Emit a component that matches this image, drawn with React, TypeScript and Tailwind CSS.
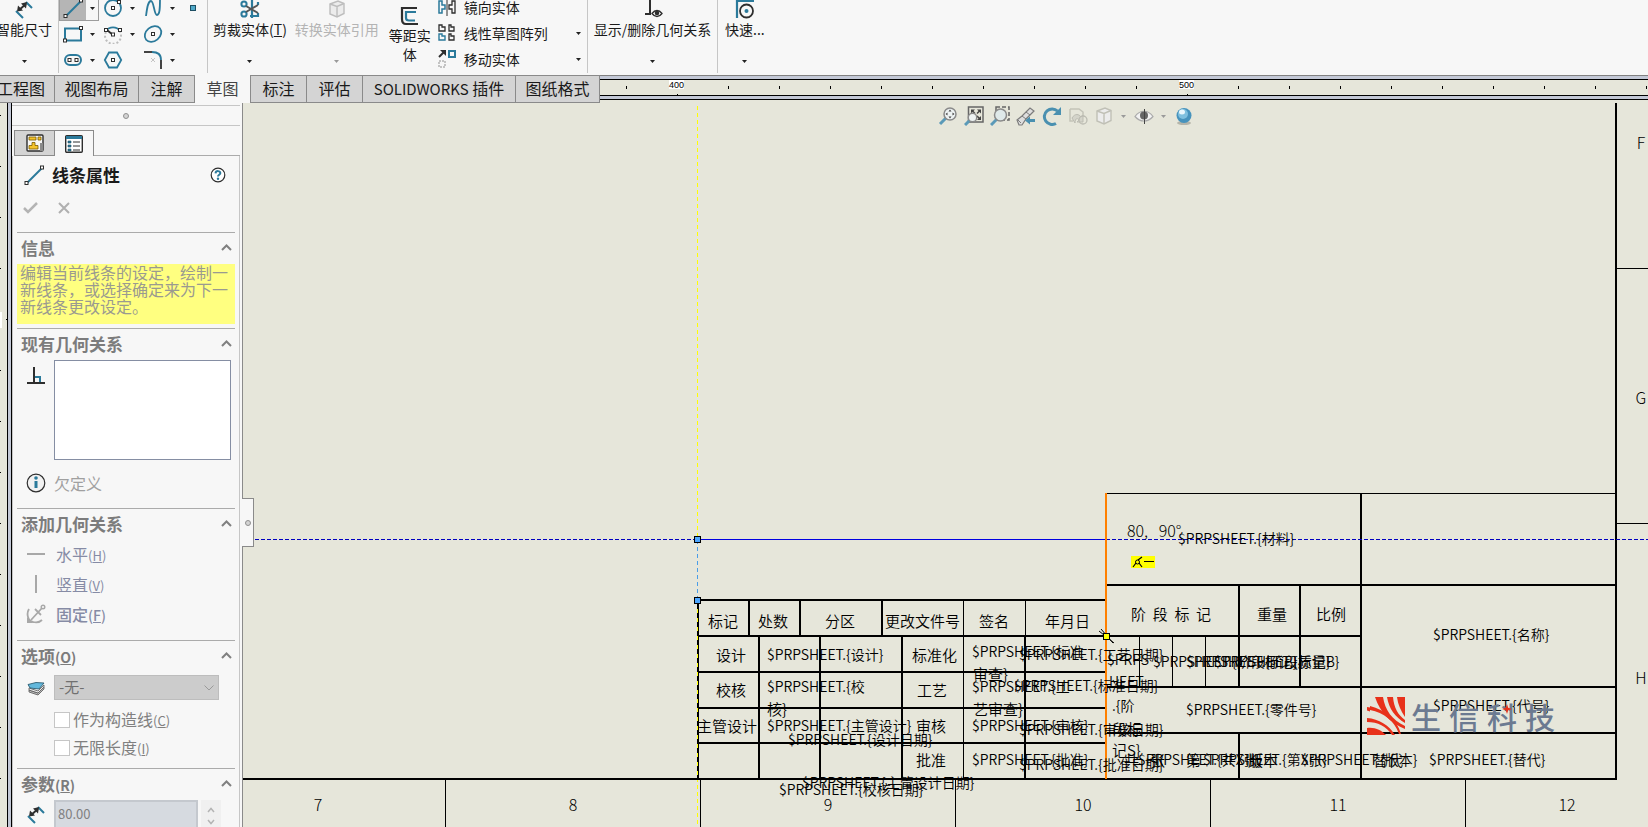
import type { ReactNode } from "react";

const BLUE = "#2b7a9b";
const INK = "#2e2e2e";

/* ---------- small shared pieces ---------- */

function Caret({ dim = false }: { dim?: boolean }) {
  return (
    <svg width="5" height="3" viewBox="0 0 5 3" aria-hidden="true" className="shrink-0">
      <path d="M0 0h5L2.5 3z" fill={dim ? "#9a9a9a" : "#222"} />
    </svg>
  );
}

function Node({ x, y }: { x: number; y: number }) {
  return <rect x={x - 1.5} y={y - 1.5} width="3" height="3" fill="#fff" stroke={INK} />;
}

function Icon({ w = 20, h = 20, children }: { w?: number; h?: number; children: ReactNode }) {
  return (
    <svg width={w} height={h} viewBox={`0 0 ${w} ${h}`} fill="none" aria-hidden="true" className="shrink-0">
      {children}
    </svg>
  );
}

/* ---------- sketch tool icons ---------- */

const LineIcon = () => (
  <Icon>
    <path d="M3 18L18 3" stroke={BLUE} strokeWidth="2" />
    <Node x={2.5} y={18} />
    <Node x={18} y={2.5} />
  </Icon>
);
const CircleIcon = () => (
  <Icon>
    <circle cx="10" cy="10" r="8" stroke={BLUE} strokeWidth="1.8" />
    <Node x={10} y={10} />
    <Node x={16} y={4} />
  </Icon>
);
const SplineIcon = () => (
  <Icon>
    <path d="M3 18C4 10 5 3 8 3s3 14 6 14 3-8 3-16" stroke={BLUE} strokeWidth="1.8" />
  </Icon>
);
const PointIcon = () => (
  <Icon>
    <rect x="7.5" y="7.5" width="5" height="5" fill="#4fa9c9" stroke="#1d4e63" />
  </Icon>
);
const RectIcon = () => (
  <Icon>
    <path d="M2 4.5h16v12H2z" stroke={BLUE} strokeWidth="2" />
    <Node x={18} y={4} />
    <Node x={2} y={16.5} />
  </Icon>
);
const ArcIcon = () => (
  <Icon>
    <path d="M3 7a8.5 8.5 0 0 1 14 0" stroke={BLUE} strokeWidth="1.8" />
    <path d="M3 8a8 8 0 1 0 14 0" stroke="#bdbdbd" strokeWidth="2" strokeDasharray="2 2" />
    <path d="M4 6l6 5" stroke={INK} strokeWidth="1.8" />
    <Node x={3} y={6} />
    <Node x={17} y={6} />
    <Node x={10} y={10.5} />
  </Icon>
);
const EllipseIcon = () => (
  <Icon>
    <ellipse cx="10" cy="10" rx="9" ry="7" transform="rotate(-40 10 10)" stroke={BLUE} strokeWidth="1.8" />
    <Node x={10} y={10} />
  </Icon>
);
const SlotIcon = () => (
  <Icon>
    <rect x="2" y="5" width="16" height="10" rx="5" stroke={BLUE} strokeWidth="2" />
    <Node x={6.5} y={10} />
    <Node x={13.5} y={10} />
  </Icon>
);
const HexIcon = () => (
  <Icon>
    <path d="M6 2.5h8l4.2 7.5L14 17.5H6L1.8 10z" stroke={BLUE} strokeWidth="1.8" />
    <Node x={10} y={10} />
  </Icon>
);
const FilletIcon = () => (
  <Icon>
    <path d="M1 2h8" stroke={INK} strokeWidth="1.8" />
    <path d="M9 2c6 0 9 2 9 8" stroke={BLUE} strokeWidth="1.8" />
    <path d="M18 10v9" stroke={INK} strokeWidth="1.8" />
    <path d="M8 8l4 4m0-4l-4 4" stroke="#c4c4c4" />
  </Icon>
);
const DimensionIcon = () => (
  <Icon>
    <path d="M2 12l7 7M12 3l6 6" stroke={BLUE} strokeWidth="2" />
    <path d="M5 11l7-6" stroke={INK} strokeWidth="2" />
    <path d="M3 12.500l1-6 5 5zM13 3l-1 6.500-5-5z" fill={INK} />
  </Icon>
);
const ScissorsIcon = () => (
  <Icon>
    <path d="M12 1v18M18 3v3m0 8v4M10 17h8" stroke={BLUE} strokeWidth="2.200" />
    <circle cx="4" cy="5" r="2.600" stroke={BLUE} strokeWidth="2" />
    <circle cx="4" cy="15" r="2.600" stroke={BLUE} strokeWidth="2" />
    <path d="M6 7l12 7M6 13l12-7" stroke="#555" strokeWidth="2" />
  </Icon>
);
const CubeIcon = ({ color = "#bdbdbd" }: { color?: string }) => (
  <Icon>
    <path d="M3 5l8-3 6 2.500v10L10 18l-7-3z" fill="#ececec" stroke={color} strokeWidth="1.400" />
    <path d="M3 5l7 2.500 7-3M10 7.500V18" stroke={color} strokeWidth="1.400" />
  </Icon>
);
const OffsetIcon = () => (
  <Icon>
    <path d="M17 2H2v11c0 3 1 5 4 5h12" stroke={INK} strokeWidth="2.200" />
    <path d="M16 6H6v6c0 2 1 2.500 3 2.500h6" stroke={BLUE} strokeWidth="2.200" />
  </Icon>
);
const MirrorIcon = () => (
  <Icon w={18} h={18}>
    <path d="M1 3h3v4h3v4H4v4H1z" stroke={BLUE} strokeWidth="1.500" />
    <path d="M17 3h-3v4h-3v4h3v4h3z" stroke={INK} strokeWidth="1.300" />
    <path d="M9 0v18" stroke={INK} />
  </Icon>
);
const PatternIcon = () => (
  <Icon w={18} h={18}>
    <path d="M1 1h3v2h3v4H1zM11 1h2v2h3v4h-5z" stroke={INK} strokeWidth="1.300" />
    <path d="M1 10h3v2h3v4H1z" stroke={BLUE} strokeWidth="1.400" />
    <path d="M11 10h2v2h3v4h-5z" stroke={INK} strokeWidth="1.300" />
  </Icon>
);
const MoveIcon = () => (
  <Icon w={18} h={18}>
    <path d="M1 7l5-5" stroke={INK} strokeWidth="2" />
    <path d="M2 0h6v6z" fill={INK} />
    <rect x="11" y="1" width="6" height="6" stroke={BLUE} strokeWidth="2" />
    <rect x="1" y="11" width="6" height="6" stroke="#c4c4c4" strokeWidth="2" strokeDasharray="2 1" />
  </Icon>
);
const RelationsIcon = () => (
  <Icon>
    <path d="M7 0v15M2 15h6" stroke={INK} strokeWidth="2" />
    <path d="M9 14.500c3-4 7-4 10 0-3 4-7 4-10 0z" fill="#fff" stroke={INK} strokeWidth="1.300" />
    <circle cx="14" cy="14" r="2.300" fill={INK} />
  </Icon>
);
const SnapIcon = () => (
  <Icon>
    <path d="M2 19V2h17" stroke={BLUE} strokeWidth="2.200" />
    <circle cx="11.500" cy="12" r="6.500" stroke={INK} strokeWidth="1.800" />
    <circle cx="11.500" cy="12" r="2" fill={BLUE} />
  </Icon>
);

/* ---------- ribbon ---------- */

const sketchTools: { label: string; icon: ReactNode; menu: boolean; active?: boolean }[] = [
  { label: "直线", icon: <LineIcon />, menu: true, active: true },
  { label: "圆", icon: <CircleIcon />, menu: true },
  { label: "样条曲线", icon: <SplineIcon />, menu: true },
  { label: "点", icon: <PointIcon />, menu: false },
  { label: "矩形", icon: <RectIcon />, menu: true },
  { label: "圆弧", icon: <ArcIcon />, menu: true },
  { label: "椭圆", icon: <EllipseIcon />, menu: true },
  { label: "", icon: null, menu: false },
  { label: "槽口", icon: <SlotIcon />, menu: true },
  { label: "多边形", icon: <HexIcon />, menu: false },
  { label: "圆角", icon: <FilletIcon />, menu: true },
];

function BigTool({ icon, children, dim }: { icon: ReactNode; children: ReactNode; dim?: boolean }) {
  return (
    <button
      type="button"
      disabled={dim}
      className={`-mt-px flex h-[74px] flex-col items-center whitespace-nowrap text-sm leading-5 ${dim ? "text-[#b4b4b4]" : "text-[#1a1a1a]"}`}
    >
      <span className="flex h-5 items-center">{icon}</span>
      <span className="h-[41px]">{children}</span>
      <Caret dim={dim} />
    </button>
  );
}

function Ribbon() {
  return (
    <header className="flex h-[75px] shrink-0 overflow-hidden bg-[#f7f7f7]">
      <div className="mb-[2px] flex w-[59px] shrink-0 justify-end border-r border-[#c6c6c6] pr-[6px]">
        <BigTool icon={<DimensionIcon />}>智能尺寸</BigTool>
      </div>
      <div className="mb-[2px] w-[149px] shrink-0 border-r border-[#c6c6c6]">
        <div className="-mt-[5px] grid grid-cols-[40px_40px_40px_28px]">
          {sketchTools.map((t, i) =>
            t.icon ? (
              <button
                key={i}
                type="button"
                aria-label={t.label}
                className={`flex h-[26px] items-center ${t.active ? "border border-[#9c9c9c]" : "border border-transparent"}`}
              >
                <span className={`flex h-full w-[26px] items-center justify-center ${t.active ? "bg-[#b5b5b5]" : ""}`}>{t.icon}</span>
                {t.menu && (
                  <span className="flex flex-1 justify-center">
                    <Caret />
                  </span>
                )}
              </button>
            ) : (
              <span key={i} />
            ),
          )}
        </div>
      </div>
      <div className="mb-[2px] flex w-[380px] shrink-0 border-r border-[#c6c6c6] pl-[5px]">
        <BigTool icon={<ScissorsIcon />}>
          剪裁实体(<u>T</u>)
        </BigTool>
        <div className="ml-2">
          <BigTool dim icon={<CubeIcon />}>
            转换实体引用
          </BigTool>
        </div>
        <button type="button" className="ml-[9px] flex w-[44px] flex-col items-center pt-[6px] text-sm leading-[19px] text-[#1a1a1a]">
          <OffsetIcon />
          <span>等距实体</span>
        </button>
        <ul className="-mt-[6px] ml-[6px] flex-1 text-sm text-[#1a1a1a]">
          <li className="flex h-[26px] items-center">
            <button type="button" className="flex items-center gap-2">
              <MirrorIcon />
              镜向实体
            </button>
          </li>
          <li className="flex h-[26px] items-center">
            <button type="button" className="flex flex-1 items-center gap-2 pr-[6px]">
              <PatternIcon />
              <span className="flex-1 text-left">线性草图阵列</span>
              <Caret />
            </button>
          </li>
          <li className="flex h-[26px] items-center">
            <button type="button" className="flex flex-1 items-center gap-2 pr-[6px]">
              <MoveIcon />
              <span className="flex-1 text-left">移动实体</span>
              <Caret />
            </button>
          </li>
        </ul>
      </div>
      <div className="mb-[2px] flex w-[130px] shrink-0 justify-center border-r border-[#c6c6c6]">
        <BigTool icon={<RelationsIcon />}>显示/删除几何关系</BigTool>
      </div>
      <div className="pl-[7px]">
        <BigTool icon={<SnapIcon />}>快速...</BigTool>
      </div>
    </header>
  );
}

/* ---------- tabs and horizontal ruler ---------- */

const tabs: { label: ReactNode; cls: string; active?: boolean }[] = [
  { label: "工程图", cls: "w-[55px] justify-end pr-[9px]" },
  { label: "视图布局", cls: "w-[84px] justify-center" },
  { label: "注解", cls: "w-[56px] justify-center" },
  { label: "草图", cls: "w-[56px] justify-center", active: true },
  { label: "标注", cls: "w-[56px] justify-center" },
  { label: "评估", cls: "w-[56px] justify-center" },
  {
    label: (
      <span>
        <span className="text-[15px]">SOLIDWORKS</span> 插件
      </span>
    ),
    cls: "w-[153px] justify-center",
  },
  { label: "图纸格式", cls: "w-[84px] justify-center" },
];

function TabBar() {
  return (
    <div className="flex h-7 shrink-0 bg-[#e6e6da]">
      <nav className="flex shrink-0">
        {tabs.map((t, i) => (
          <button
            key={i}
            type="button"
            className={`flex shrink-0 items-center whitespace-nowrap border-r border-[#8a8a8a] pb-[2px] text-base leading-5 ${
              t.active ? "bg-[#f7f7f7] text-[#444]" : "border-y bg-[#d4d4d4] text-[#1a1a1a]"
            } ${t.cls}`}
          >
            {t.label}
          </button>
        ))}
      </nav>
      <div className="min-w-0 flex-1">
        <div className="h-1 border-t border-[#808080] bg-[#c3c8d6]" />
        <div className="h-[17px] border-y border-black">
          <svg width="100%" height="15" aria-hidden="true" className="block">
            {Array.from({ length: 60 }, (_, i) => (
              <path key={i} d={(i - 1) % 10 ? `M${26.5 + i * 51} 6v3` : `M${26.5 + i * 51} 14v1`} stroke="#000" />
            ))}
            {[400, 500].map((n, i) => (
              <g key={n}>
                <rect x={69 + i * 510} y="0" width="15" height="9" fill="#fff" />
                <text x={76.5 + i * 510} y="8" textAnchor="middle" className="fill-black font-['Liberation_Sans'] text-[9px]">
                  {n}
                </text>
              </g>
            ))}
          </svg>
        </div>
        <div className="h-1 border-b border-black bg-[#c3c8d6]" />
      </div>
    </div>
  );
}

/* ---------- property panel ---------- */

function Section({ title, children }: { title: ReactNode; children: ReactNode }) {
  return (
    <section className="mx-1 border-t border-[#ababab]">
      <h3 className="flex h-[31px] items-center justify-between pb-[2px] pl-1 pr-[3px] text-[17px] font-bold text-[#7c7c7c]">
        <span>{title}</span>
        <button type="button" aria-label="折叠">
          <svg width="11" height="7" viewBox="0 0 11 7" fill="none" aria-hidden="true">
            <path d="M1 6l4.500-4.500L10 6" stroke="#808080" strokeWidth="2" />
          </svg>
        </button>
      </h3>
      {children}
    </section>
  );
}

function PropertyPanel() {
  return (
    <aside className="relative flex w-[231px] shrink-0 flex-col border-r border-[#8a8a8a] bg-[#f7f7f7]">
      <div className="mr-[2px] mt-[2px] flex h-[21px] shrink-0 items-center justify-center border-y border-[#c6c6c6]">
        <span className="h-[6px] w-[6px] rounded-full border border-[#909090] bg-[#d4d4d4]" />
      </div>
      <div className="mr-[2px] mt-1 flex h-[26px] shrink-0">
        <button type="button" aria-label="特征树" className="ml-[2px] flex w-10 items-center justify-center border border-r-0 border-[#8a8a8a] bg-[#d4d4d4]">
          <Icon w={18} h={18}>
            <rect x="1" y="1" width="16" height="16" rx="1" fill="#f7f7f7" stroke={INK} strokeWidth="1.400" />
            <path d="M3 3h7v3H3zM12 3h3v3h-3z" fill="#f5c42c" stroke="#7a5c00" strokeWidth=".8" />
            <path d="M6 8.500h3v3h3v3.500H3v-3.500h3z" fill="#f5c42c" stroke="#7a5c00" strokeWidth=".8" />
            <path d="M14 9h3v8h-3z" fill="#8a8a8a" />
          </Icon>
        </button>
        <button type="button" aria-label="属性" className="flex w-10 items-center justify-center border-x border-t border-[#8a8a8a]">
          <Icon w={18} h={18}>
            <rect x=".7" y=".7" width="16.600" height="16.600" rx="1" fill="#fff" stroke={INK} strokeWidth="1.400" />
            <path d="M1 1h16v3H1z" fill={BLUE} />
            <path d="M3 6h3v2H3zM3 10h3v2H3zM3 14h3v2H3z" fill={BLUE} stroke="#1d4e63" strokeWidth=".6" />
            <path d="M8 7h7M8 11h7M8 15h7" stroke={INK} />
          </Icon>
        </button>
        <span className="flex-1 border-b border-[#ababab]" />
      </div>

      <div className="mr-[2px] min-h-0 flex-1 overflow-hidden border-x border-[#c6c6c6]">
        <div className="flex h-[38px] items-center pl-[11px] pr-[13px]">
          <LineIcon />
          <h2 className="ml-2 flex-1 text-[17px] font-bold text-[#1a1a1a]">线条属性</h2>
          <button type="button" aria-label="帮助">
            <Icon w={16} h={16}>
              <circle cx="8" cy="8" r="6.800" fill="#fff" stroke={INK} strokeWidth="1.200" />
              <path d="M5.500 6.300C5.800 3.300 10.600 3.500 10.300 6.300 10.100 7.800 8 7.700 8 9.500" stroke={BLUE} strokeWidth="2" />
              <circle cx="8" cy="11.800" r="1.200" fill={BLUE} />
            </Icon>
          </button>
        </div>
        <div className="flex h-[38px] items-start gap-[19px] pl-[10px] pt-[7px]">
          <button type="button" aria-label="确定" disabled>
            <Icon w={15} h={14}>
              <path d="M1 7l4 4 9-9" stroke="#b4b4b4" strokeWidth="2.500" />
            </Icon>
          </button>
          <button type="button" aria-label="取消" disabled>
            <Icon w={14} h={14}>
              <path d="M2 2l10 10M12 2L2 12" stroke="#b0b0b0" strokeWidth="2" />
            </Icon>
          </button>
        </div>

        <Section title="信息">
          <p className="mb-1 h-[60px] break-all bg-[#ffff80] pl-[3px] pr-[7px] text-base leading-[17px] text-[#9a9a90]">
            编辑当前线条的设定，绘制一新线条，或选择确定来为下一新线条更改设定。
          </p>
        </Section>

        <Section title="现有几何关系">
          <div className="flex pr-1">
            <span className="w-[37px] pl-[9px] pt-[6px]">
              <Icon>
                <path d="M8 1v16" stroke={INK} strokeWidth="2" />
                <path d="M1 17h18" stroke={INK} strokeWidth="2" />
                <path d="M9 11h5v5" stroke={BLUE} strokeWidth="2" />
              </Icon>
            </span>
            <select multiple size={4} aria-label="现有几何关系" className="h-[100px] flex-1 appearance-none border border-[#858ea3] bg-white" />
          </div>
          <div className="flex h-12 items-center pb-[2px] pl-[9px] text-base text-[#a0a0a0]">
            <Icon>
              <circle cx="10" cy="10" r="8.800" fill="#f2f2f2" stroke={INK} strokeWidth="1.200" />
              <path d="M10 8v7" stroke={BLUE} strokeWidth="3" />
              <circle cx="10" cy="5" r="1.800" fill={BLUE} />
            </Icon>
            <span className="ml-2">欠定义</span>
          </div>
        </Section>

        <Section title="添加几何关系">
          <div className="mb-[10px] pl-[9px] text-base text-[#868ba5]">
            <button type="button" className="flex h-[30px] w-full items-center gap-[10px] pb-[2px]">
              <Icon>
                <path d="M1 10h18" stroke="#a8a8a8" strokeWidth="2" />
              </Icon>
              <span>
                水平<span className="text-[13px]">(<u>H</u>)</span>
              </span>
            </button>
            <button type="button" className="flex h-[30px] w-full items-center gap-[10px] pb-[2px]">
              <Icon>
                <path d="M10 1v18" stroke="#a8a8a8" strokeWidth="2" />
              </Icon>
              <span>
                竖直<span className="text-[13px]">(<u>V</u>)</span>
              </span>
            </button>
            <button type="button" className="flex h-[30px] w-full items-center gap-[10px] pb-[2px] font-medium">
              <Icon>
                <path d="M5 16L16 4M9 5l6 6" stroke="#a8a8a8" strokeWidth="1.800" />
                <path d="M3 5c-3 5-1 12 4 13 4 1 7 0 9-2" stroke="#a8a8a8" strokeWidth="1.800" />
                <path d="M1 13v6h6z" fill="#a8a8a8" />
                <circle cx="17" cy="3" r="1.800" stroke="#a8a8a8" strokeWidth="1.400" />
              </Icon>
              <span>
                固定<span className="text-sm">(<u>F</u>)</span>
              </span>
            </button>
          </div>
        </Section>

        <Section title={<>选项<span className="text-sm">(<u>O</u>)</span></>}>
          <div className="mt-[3px] flex items-center">
            <span className="w-[37px] pl-[9px]">
              <Icon>
                <path d="M3 12l9 3 6-6v2l-6 6-9-3z" fill="#bbb" stroke="#555" strokeWidth=".8" />
                <path d="M3 10l9 3 6-6v2l-6 6-9-3z" fill="#eee" stroke="#555" strokeWidth=".8" />
                <path d="M2 6.500l8-2 8 .500-5 6-9-1z" fill="#63b8dc" stroke="#1d4e63" strokeWidth=".8" />
              </Icon>
            </span>
            <div className="relative mr-4 flex-1">
              <select disabled aria-label="图层" className="block h-[25px] w-full appearance-none border border-[#bdbdbd] bg-[#cccccc] pl-1 text-[15px] text-[#707070] opacity-100">
                <option>-无-</option>
              </select>
              <svg width="10" height="6" viewBox="0 0 10 6" fill="none" aria-hidden="true" className="pointer-events-none absolute right-[5px] top-[10px]">
                <path d="M.5.5L5 5 9.500.5" stroke="#9a9a9a" />
              </svg>
            </div>
          </div>
          <div className="mb-[6px] mt-[6px] pl-[37px] text-base text-[#808080]">
            <label className="flex h-7 items-center gap-[3px]">
              <input type="checkbox" disabled className="h-4 w-4 appearance-none border border-[#c6c6c6] bg-white" />
              <span className="pb-[2px]">
                作为构造线<span className="text-[13px]">(<u>C</u>)</span>
              </span>
            </label>
            <label className="flex h-7 items-center gap-[3px]">
              <input type="checkbox" disabled className="h-4 w-4 appearance-none border border-[#c6c6c6] bg-white" />
              <span className="pb-[2px]">
                无限长度<span className="text-[13px]">(<u>I</u>)</span>
              </span>
            </label>
          </div>
        </Section>

        <Section title={<>参数<span className="text-sm">(<u>R</u>)</span></>}>
          <div className="flex">
            <span className="w-[37px] pl-[9px] pt-1">
              <DimensionIcon />
            </span>
            <input aria-label="长度" disabled defaultValue="80.00" className="h-8 w-[144px] border-2 border-[#c4c8ce] bg-[#d6dae0] pb-[6px] pl-[2px] text-[13px] text-[#808080]" />
            <div className="ml-[3px] flex h-8 w-5 flex-col items-center justify-evenly bg-[#f0f0f0]">
              <button type="button" disabled aria-label="增加">
                <svg width="8" height="6" viewBox="0 0 8 6" fill="none" aria-hidden="true" className="block">
                  <path d="M1 5l3-3.500L7 5" stroke="#b4b4b4" strokeWidth="1.500" />
                </svg>
              </button>
              <button type="button" disabled aria-label="减少">
                <svg width="8" height="6" viewBox="0 0 8 6" fill="none" aria-hidden="true" className="block">
                  <path d="M1 1l3 3.500L7 1" stroke="#b4b4b4" strokeWidth="1.500" />
                </svg>
              </button>
            </div>
          </div>
        </Section>
      </div>

      <button
        type="button"
        aria-label="收起面板"
        className="absolute -right-3 top-[395px] z-10 flex h-[49px] w-3 items-center justify-center border border-l-0 border-[#8a8a8a] bg-[#f7f7f7]"
      >
        <span className="h-[6px] w-[6px] rounded-full border border-[#909090] bg-[#d4d4d4]" />
      </button>
    </aside>
  );
}

/* ---------- drawing sheet ---------- */

const thick =
  "M243 779H1617M1616 99V780M698 600H1106M698 636H1106M698 672H1106M698 708H1106M698 743H1106" +
  "M749 600V636M800 600V636M882 600V636M759 636V779M820 636V779M902 636V779M1025 636V779" +
  "M1361 493V779M1106 585H1616M1239 585V687M1300 585V687M1106 636H1361M1106 687H1616M1106 733H1616M1239 733V779";

const thin =
  "M1106 493.5H1616M963.5 600V779M1025.5 600V636M698.5 600V779M1139.5 636V687M1172.5 636V687M1205.5 636V687" +
  "M1616 268.5H3000M1616 523.5H3000M445.500 779V3000M700.500 779V3000M955.500 779V3000M1210.500 779V3000M1465.500 779V3000";

/* x, baseline, text */
type Note = [number, number, string];

const labels: Note[] = [
  [708, 627, "标记"],
  [758, 627, "处数"],
  [825, 627, "分区"],
  [885, 627, "更改文件号"],
  [979, 627, "签名"],
  [1045, 627, "年月日"],
  [716, 661, "设计"],
  [912, 661, "标准化"],
  [973, 680, "审查}"],
  [716, 696, "校核"],
  [767, 715, "核}"],
  [917, 696, "工艺"],
  [973, 715, "艺审查}"],
  [697, 732, "主管设计"],
  [916, 732, "审核"],
  [916, 766, "批准"],
  [1131, 620, "阶\u00a0\u00a0段\u00a0\u00a0标\u00a0\u00a0记"],
  [1257, 620, "重量"],
  [1316, 620, "比例"],
  [1112, 735, "段标"],
  [1112, 756, "记S}"],
  [1124, 766, "共"],
  [1150, 766, "张"],
  [1186, 766, "第"],
  [1248, 766, "版本"],
  [1373, 766, "替代"],
];

const links: Note[] = [
  [767, 660, "$PRPSHEET.{设计}"],
  [972, 657, "$PRPSHEET.{标准"],
  [1019, 660, "$PRPSHEET.{工艺日期}"],
  [767, 692, "$PRPSHEET.{校"],
  [972, 692, "$PRPSHEET.{工"],
  [1014, 691, "$PRPSHEET.{标准日期}"],
  [767, 731, "$PRPSHEET.{主管设计}"],
  [972, 731, "$PRPSHEET.{审核}"],
  [1019, 735, "$PRPSHEET.{审核日期}"],
  [788, 745, "$PRPSHEET.{设计日期}"],
  [972, 765, "$PRPSHEET.{批准}"],
  [1019, 770, "$PRPSHEET.{批准日期}"],
  [802, 788, "$PRPSHEET.{主管设计日期}"],
  [779, 795, "$PRPSHEET.{校核日期}"],
  [1178, 544, "$PRPSHEET.{材料}"],
  [1107, 665, "$PRPS"],
  [1109, 687, "HEET"],
  [1112, 711, ".{阶"],
  [1153, 667, "$PRPSHEET.{阶段标记}"],
  [1186, 667, "$PRPSHEET.{阶段标记B}"],
  [1214, 667, "$PRPSHEET.{质量}"],
  [1186, 715, "$PRPSHEET.{零件号}"],
  [1433, 640, "$PRPSHEET.{名称}"],
  [1433, 711, "$PRPSHEET.{代号}"],
  [1138, 765, "$PRPSHEET.{共X张}"],
  [1203, 765, "$PRPSHEET.{第X张}"],
  [1301, 765, "$PRPSHEET.{版本}"],
  [1429, 765, "$PRPSHEET.{替代}"],
];

const zones: Note[] = [
  [318, 811, "7"],
  [573, 811, "8"],
  [828, 811, "9"],
  [1083, 811, "10"],
  [1338, 811, "11"],
  [1567, 811, "12"],
  [1641, 149, "F"],
  [1641, 404, "G"],
  [1641, 684, "H"],
];

function Notes({ items, className, anchor }: { items: Note[]; className: string; anchor?: "middle" }) {
  return (
    <g className={className} textAnchor={anchor}>
      {items.map(([x, y, t], i) => (
        <text key={i} x={x} y={y}>
          {t}
        </text>
      ))}
    </g>
  );
}

function Sheet() {
  return (
    <svg width="100%" height="100%" className="absolute inset-0 fill-black font-['Noto_Sans_CJK_SC',sans-serif]" role="img" aria-label="图纸">
      <g transform="translate(-243 -103)">
        <path d="M697.500 99V3000" stroke="#ffff00" strokeDasharray="4 3" />
        <path d="M697.500 540V600" stroke="#4a9de8" strokeDasharray="4 3" />
        <path d={thick} stroke="#000" strokeWidth="2" />
        <path d={thin} stroke="#000" />
        <path d="M697.500 600V779" stroke="#000" />
        <path d="M697.500 600V779" stroke="#ffff00" strokeDasharray="4 5" />
        <path d="M243 539.500H697M1106 539.500H3000" stroke="#0000c0" strokeDasharray="4 2" />
        <path d="M697 539.500H1106" stroke="#0000e0" />
        <path d="M1106 493V779" stroke="#ff8000" strokeWidth="2" />

        <Notes items={labels} className="text-[15px] font-[350]" />
        <Notes items={links} className="text-sm font-[350]" />
        <Notes items={zones} className="text-base font-light" anchor="middle" />

        <text x="1127" y="537" className="text-base font-light">
          80,&nbsp;&nbsp;&nbsp;90°
        </text>
        <rect x="1131" y="556" width="24" height="12" fill="#ffff00" />
        <path d="M1133 567l3-4M1138 560l4-3M1139 563l3 4M1144 561.500h10" stroke="#000" strokeWidth="1.200" fill="none" />
        <circle cx="1137.500" cy="562" r="2" stroke="#000" fill="none" />

        {[540, 601].map((y) => (
          <rect key={y} x="694.500" y={y - 3.5} width="6" height="6" fill="#4da6ff" stroke="#000" />
        ))}
        <path d="M1099 631l15 12M1101 629l12 14" stroke="#000" />
        <rect x="1103.500" y="633.500" width="6" height="6" fill="#ffff00" stroke="#000" />
      </g>
    </svg>
  );
}

function ViewToolbar() {
  const lens = (
    <>
      <path d="M2 18l6-6" stroke="#5b9ab8" strokeWidth="3" />
      <circle cx="12" cy="8" r="6" fill="#eef3f3" stroke="#8a8a8a" strokeWidth="1.500" />
    </>
  );
  return (
    <div className="absolute left-[695px] top-[3px] flex items-center gap-[6px]">
      <button type="button" aria-label="整屏显示全图">
        <Icon>
          {lens}
          <path d="M12 3.500l1.500 2h-3zM12 12.500l1.500-2h-3zM7.500 8l2-1.500v3zM16.500 8l-2-1.500v3z" fill="#444" />
        </Icon>
      </button>
      <button type="button" aria-label="局部放大">
        <Icon>
          <rect x="4.500" y="1" width="14.500" height="15" stroke="#666" strokeWidth="1.500" />
          <path d="M7 3.500h4l-4 4zM17 3.500v4l-4-4zM17 14h-4l4-4z" fill="#444" />
          <path d="M8 4.500l3 3M16 4.500l-3 3M16 13l-3-3" stroke="#444" strokeWidth="1.500" />
          <path d="M1 19l5-5" stroke="#5b9ab8" strokeWidth="3" />
          <circle cx="8.500" cy="11.500" r="4.200" fill="#eef3f3" stroke="#8a8a8a" strokeWidth="1.400" />
        </Icon>
      </button>
      <button type="button" aria-label="放大选取范围">
        <Icon>
          <rect x="6" y="1" width="13" height="13" stroke="#666" strokeWidth="1.500" strokeDasharray="4 2" />
          <path d="M1 19l6-6" stroke="#5b9ab8" strokeWidth="3" />
          <circle cx="10.500" cy="9" r="6" fill="#dfe9e9" stroke="#8a8a8a" strokeWidth="1.500" />
        </Icon>
      </button>
      <button type="button" aria-label="上一视图">
        <Icon>
          <path d="M1 14l5-4 8-8 4 3-8 8-4 6-3 0z" fill="#dedede" stroke="#7c7c7c" strokeWidth="1.200" />
          <path d="M6 10l4 3M10 6l4 3M2 14l3 3" stroke="#7c7c7c" />
          <path d="M9 14.500l5-4v2.500h5v3h-5v2.500z" fill="#4a90b0" />
        </Icon>
      </button>
      <button type="button" aria-label="旋转视图">
        <Icon>
          <path d="M14 17.500A7.800 7.800 0 1 1 15.500 5" stroke="#4a90b0" strokeWidth="3" />
          <path d="M19 1v8h-8z" fill="#4a90b0" />
        </Icon>
      </button>
      <button type="button" aria-label="三维工程图视图" disabled>
        <Icon>
          <path d="M2 3h9l4 3v4M2 3v12h3" stroke="#c3c3b8" strokeWidth="1.500" />
          <path d="M4 12c3-5 7-4 9-1l2-2v7H9l2-2c-2-3-4-1-4 3z" fill="#d4d4ca" stroke="#bcbcb2" />
          <circle cx="15" cy="14" r="4" stroke="#bcbcb2" strokeWidth="1.300" />
        </Icon>
      </button>
      <button type="button" aria-label="显示样式" disabled className="flex items-center gap-[7px]">
        <CubeIcon color="#c0c0b6" />
        <Caret dim />
      </button>
      <button type="button" aria-label="隐藏或显示项目" className="ml-[2px] flex items-center gap-[7px]">
        <Icon>
          <path d="M1 10.500c5-7 13-7 18 0-5 6-13 6-18 0z" fill="#f2f2f2" stroke="#aaa" strokeWidth="1.200" />
          <circle cx="10" cy="9.500" r="4" fill="#666" />
          <path d="M10.500 3v15" stroke="#444" />
        </Icon>
        <Caret dim />
      </button>
      <button type="button" aria-label="外观" className="ml-[2px]">
        <Icon>
          <ellipse cx="10" cy="17" rx="7" ry="2" fill="#b5b5aa" />
          <circle cx="10" cy="9.500" r="7.500" fill="#4793bd" />
          <circle cx="9" cy="8" r="5" fill="#7fc0df" />
          <ellipse cx="8" cy="6" rx="3" ry="2.500" fill="#e9f7fd" />
        </Icon>
      </button>
    </div>
  );
}

function Watermark() {
  return (
    <div className="pointer-events-none absolute left-[1124px] top-[594px] flex items-center gap-[6px]">
      <svg width="38" height="38" viewBox="0 0 38 38" fill="#e8311a" aria-hidden="true">
        <path d="M30 0h8v20C34 14 31 8 30 0z" />
        <path d="M20 0h6c1 11 5 18 12 23v3C28 20 22 12 20 0z" />
        <path d="M8 0h8c2 13 9 23 22 29v3C23 26 13 15 8 0z" />
        <path d="M0 10c15 4 27 13 31 28h-2C24 24 14 17 0 14z" transform="translate(3 -1)" />
        <path d="M0 10l3 .5v4L0 13.500z" />
        <path d="M0 21c12 1 22 7 28 17h-3C19 29 11 25 0 25z" />
        <path d="M0 31c8-1 14 2 19 7H0z" />
      </svg>
      <div className="relative flex gap-2 font-['Noto_Sans_CJK_SC',sans-serif] text-3xl font-medium text-[#6c7a91]">
        <span>生</span>
        <span>信</span>
        <span>科</span>
        <span>技</span>
        <svg width="10" height="10" viewBox="0 0 10 10" aria-hidden="true" className="absolute left-[91px] top-[6px]">
          <path d="M5 0l1.200 3.800L10 5 6.200 6.200 5 10 3.800 6.200 0 5l3.800-1.200z" fill="#e8311a" />
        </svg>
      </div>
    </div>
  );
}

export default function App() {
  return (
    <div className="flex h-screen flex-col overflow-hidden bg-[#e6e6da] font-['Noto_Sans_CJK_SC',sans-serif]">
      <Ribbon />
      <TabBar />
      <div className="flex min-h-0 flex-1">
        <div className="w-[7px] shrink-0 overflow-hidden">
          <svg width="7" height="100%" aria-hidden="true">
            {Array.from({ length: 40 }, (_, i) => (
              <path key={i} d={i === 4 ? "M6 216.500h1" : `M0 ${12.5 + i * 51}h1`} stroke="#000" />
            ))}
            <rect x="0" y="209" width="2" height="16" fill="#fff" />
          </svg>
        </div>
        <div className="w-[5px] shrink-0 border-x border-black bg-[#c3c8d6]" />
        <PropertyPanel />
        <main className="relative min-w-0 flex-1 overflow-hidden">
          <Sheet />
          <ViewToolbar />
          <Watermark />
        </main>
      </div>
    </div>
  );
}
